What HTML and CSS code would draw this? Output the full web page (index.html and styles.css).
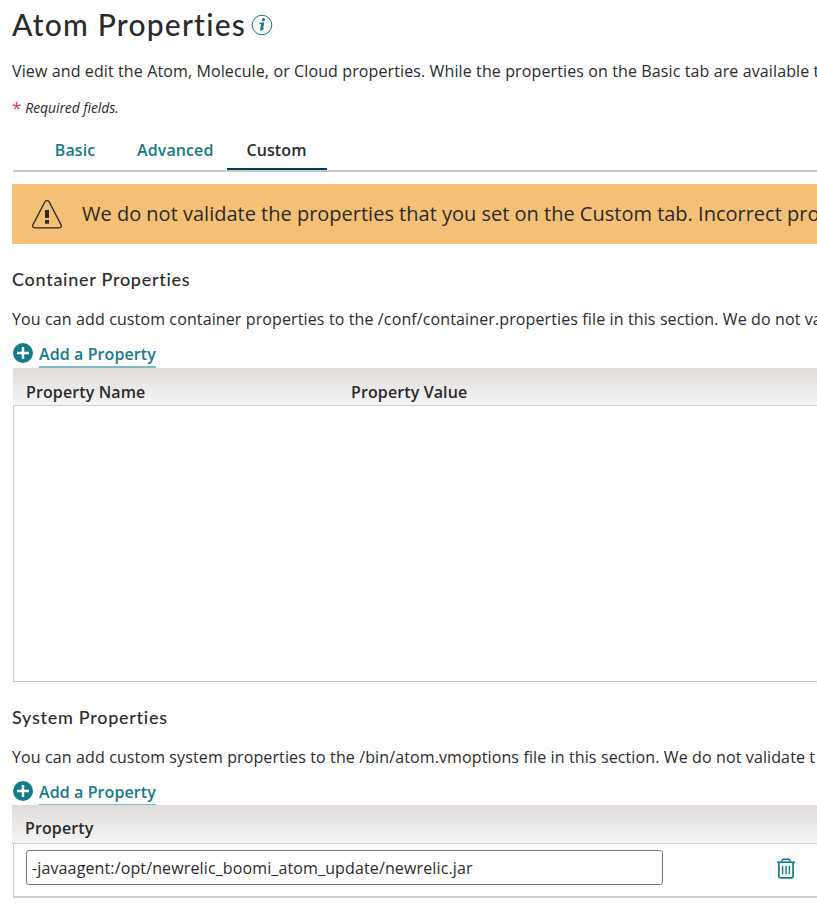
FILE: index.html
```html
<!DOCTYPE html>
<html lang="en">
<head>
<meta charset="utf-8">
<title>Atom Properties</title>
<link rel="stylesheet" href="styles.css">
</head>
<body>
<main class="page">
  <header class="title-row">
    <h1>Atom Properties</h1>
    <svg class="info" viewBox="0 0 22 22" width="22" height="22" aria-hidden="true">
      <circle cx="11" cy="11" r="9.8" fill="none" stroke="currentColor" stroke-width="1"/>
      <circle cx="12.4" cy="5.7" r="1.6" fill="currentColor"/>
      <path d="M8.5 9.6 12.2 9 10.7 15.4 12.7 14.2" fill="none" stroke="currentColor" stroke-width="1.3"/>
      <path d="M10.4 9.2h2.7l-1.5 6.6c-.6 1-2.9.7-2.5-.6z" fill="currentColor"/>
    </svg>
  </header>
  <p class="intro">View and edit the Atom, Molecule, or Cloud properties. While the properties on the Basic tab are available to</p>
  <p class="required"><span class="star">*</span><em>Required fields.</em></p>
  <nav class="tabs">
    <a class="tab tab-basic">Basic</a>
    <a class="tab tab-advanced">Advanced</a>
    <a class="tab active">Custom</a>
  </nav>
  <div class="warning">
    <svg viewBox="0 0 30 29" width="30" height="29" aria-hidden="true">
      <path d="M12.7 2.1Q15-1.1 17.3 2.1L29 24.6Q30.2 27.7 27 27.8H3Q-.2 27.7 1 24.6Z" fill="none" stroke="currentColor" stroke-width="1.25"/>
      <path d="M13 10h4v8h-4zM13 20h4v3.7h-4z" fill="currentColor"/>
    </svg>
    <span>We do not validate the properties that you set on the Custom tab. Incorrect prop</span>
  </div>

  <section class="container-section">
    <h2>Container Properties</h2>
    <p class="description">You can add custom container properties to the /conf/container.properties file in this section. We do not val</p>
    <div class="add-row">
      <svg viewBox="0 0 20 20" width="20" height="20" aria-hidden="true"><circle cx="10" cy="10" r="10" fill="currentColor"/><path d="M10 4v12M4 10h12" stroke="#fff" stroke-width="2.4"/></svg>
      <a class="add">Add a Property</a>
    </div>
    <div class="grid-head two"><span>Property Name</span><span>Property Value</span></div>
    <div class="grid-body empty"></div>
  </section>

  <section class="system-section">
    <h2>System Properties</h2>
    <p class="description">You can add custom system properties to the /bin/atom.vmoptions file in this section. We do not validate t</p>
    <div class="add-row">
      <svg viewBox="0 0 20 20" width="20" height="20" aria-hidden="true"><circle cx="10" cy="10" r="10" fill="currentColor"/><path d="M10 4v12M4 10h12" stroke="#fff" stroke-width="2.4"/></svg>
      <a class="add">Add a Property</a>
    </div>
    <div class="grid-head one"><span>Property</span></div>
    <div class="grid-body row">
      <input class="field" type="text" value="-javaagent:/opt/newrelic_boomi_atom_update/newrelic.jar">
      <svg class="trash" viewBox="0 0 20 21" width="20" height="21" fill="none" stroke="currentColor" aria-hidden="true">
        <path d="M1 4.2h18" stroke-width="1.6"/>
        <path d="M6 3.8V2.6Q6 1.2 7.4 1.2h5.2Q14 1.2 14 2.6v1.2" stroke-width="1.5"/>
        <path d="M2.9 4.5V18.2Q2.9 19.8 4.5 19.8h11Q17.1 19.8 17.1 18.2V4.5" stroke-width="1.7"/>
        <path d="M6.6 7.8v8.4M10 7.8v8.4M13.4 7.8v8.4" stroke-width="1.4"/>
      </svg>
    </div>
  </section>
</main>
</body>
</html>
```

FILE: styles.css
```css
* { box-sizing: border-box; }
html, body { overflow: hidden; }
body {
  margin: 0;
  background: #fff;
  color: #2b2b2b;
  font: 16px/22px "Open Sans", sans-serif;
}
h1, h2, p { margin: 0; white-space: nowrap; }
svg { display: block; flex: none; }
.page { padding-left: 12px; width: 817px; height: 906px; overflow: hidden; }
.title-row { display: flex; height: 60px; }
h1 {
  width: 239px;
  padding-top: 4px;
  font: 500 30px/40px Lato, sans-serif;
  letter-spacing: 1.2px;
}
.info { margin-top: 14px; color: #127b87; }
.intro { height: 37px; letter-spacing: .115px; }
.required { display: flex; gap: 4px; height: 38px; font-size: 14px; letter-spacing: -.1px; }
.star { color: #d33a55; font-size: 17px; }
.tabs {
  display: flex;
  height: 37px;
  margin-left: 1px;
  border-bottom: 2px solid #c8c8c8;
  font-weight: 600;
  letter-spacing: .1px;
  color: #127b87;
}
.tab { height: 37px; padding-top: 4px; text-align: center; }
.tab-basic { width: 124px; }
.tab-advanced { width: 90px; padding-right: 13px; text-align: left; }
.active { width: 100px; height: 35px; padding-right: 1px; color: #2b2b2b; border-bottom: 2px solid #033d58; }
.warning {
  display: flex;
  align-items: center;
  gap: 20px;
  height: 60px;
  margin-top: 12px;
  padding-left: 20px;
  overflow: hidden;
  white-space: nowrap;
  background: #f4c075;
  font-size: 20px;
}
.container-section { height: 438px; padding-top: 23px; }
.system-section { padding-top: 23px; }
h2 {
  height: 41px;
  font: 500 18px/24px Lato, sans-serif;
  letter-spacing: .72px;
}
.description { height: 34px; letter-spacing: .12px; }
.add-row { display: flex; gap: 6px; height: 26px; padding-left: 1px; color: #127b87; }
.add-row svg { margin-top: 1px; }
.add { height: 26px; padding-top: 1px; border-bottom: 2px solid #82b9c0; font-weight: 600; letter-spacing: .09px; }
.system-section .add-row { height: 25px; overflow: hidden; }
.grid-head {
  display: grid;
  background: linear-gradient(#dfdbda, #f5f5f5);
  border-bottom: 1px solid #d2d2d2;
  font-weight: 600;
  letter-spacing: .11px;
}
.two { height: 38px; margin-left: 1px; padding: 13px 0 0 13px; grid-template-columns: 325px 1fr; }
.one { height: 39px; padding: 12px 0 0 13px; }
.grid-body { margin-left: 1px; border-left: 1px solid #c8c8c8; }
.empty { height: 276px; border-bottom: 1px solid #c8c8c8; }
.row { display: flex; height: 54px; padding: 6px 0 0 12px; border-bottom: 2px solid #cfcfcf; }
.field {
  width: 637px;
  height: 35px;
  padding: 0 5px;
  border: 1px solid #777;
  border-radius: 3px;
  color: #2b2b2b;
  background: #fff;
  font: inherit;
  letter-spacing: .13px;
}
.trash { margin: 8px 0 0 113px; color: #127b87; }
```
